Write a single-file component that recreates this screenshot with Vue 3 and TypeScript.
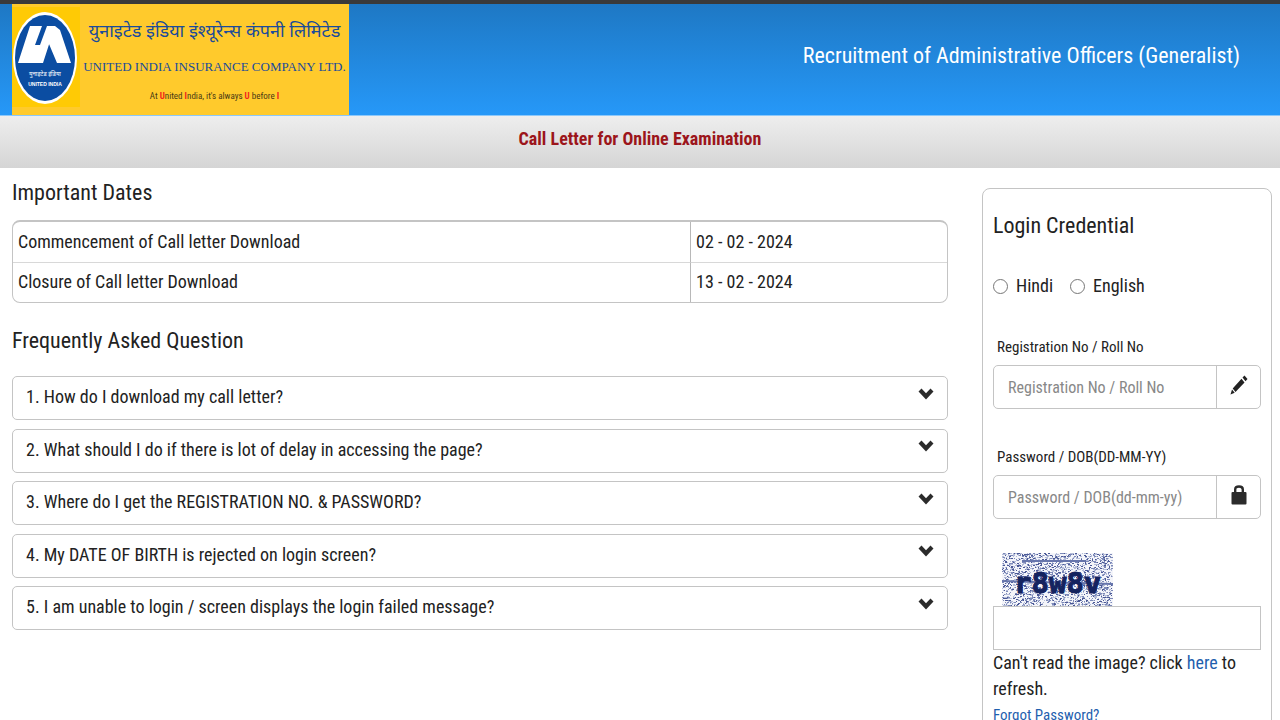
<script setup lang="ts">
import { ref } from 'vue'

interface DateRow {
  label: string
  value: string
}

const dates: DateRow[] = [
  { label: 'Commencement of Call letter Download', value: '02 - 02 - 2024' },
  { label: 'Closure of Call letter Download', value: '13 - 02 - 2024' },
]

const questions: string[] = [
  '1. How do I download my call letter?',
  '2. What should I do if there is lot of delay in accessing the page?',
  '3. Where do I get the REGISTRATION NO. & PASSWORD?',
  '4. My DATE OF BIRTH is rejected on login screen?',
  '5. I am unable to login / screen displays the login failed message?',
]

const language = ref<string>('')
const registration = ref<string>('')
const password = ref<string>('')
const captcha = ref<string>('')

// Seeded speckle layers behind the captcha characters.
function speckle(seed: number, count: number): string {
  let s = seed
  const next = (): number => {
    s = (s * 48271) % 2147483647
    return s / 2147483647
  }
  let d = ''
  for (let i = 0; i < count; i++) {
    const x = Math.floor(next() * 110)
    const y = Math.floor(next() * 53)
    const w = next() > 0.6 ? 2 : 1
    d += `M${x} ${y}h${w}v1h-${w}z`
  }
  return d
}

const layers = [
  { color: '#b4bcd8', d: speckle(1117, 1300) },
  { color: '#7c89b8', d: speckle(4721, 800) },
  { color: '#4a5896', d: speckle(9377, 500) },
]
</script>

<template>
  <div class="page">
    <header class="banner">
      <div class="brand">
        <svg class="emblem" viewBox="0 0 68 100" aria-hidden="true">
          <rect width="68" height="100" fill="#ffca05" />
          <ellipse cx="33" cy="51" rx="32" ry="46" fill="#fff" />
          <ellipse cx="33" cy="51" rx="30" ry="43" fill="#0b4da2" />
          <path d="M18 19H30L23 38H28L35 19H43L31 56H6zM43 19L48 23L59 56H45L37 37z" fill="#fff" />
          <text x="33" y="69" class="seal-hindi" lang="hi">युनाइटेड इंडिया</text>
          <text x="33" y="79" class="seal-english">UNITED INDIA</text>
        </svg>
        <div class="names">
          <span class="hindi" lang="hi">युनाइटेड इंडिया इंश्यूरेन्स कंपनी लिमिटेड</span>
          <span class="english">UNITED INDIA INSURANCE COMPANY LTD.</span>
          <span class="motto">At <b>U</b>nited <b>I</b>ndia, it's always <b>U</b> before <b>I</b></span>
        </div>
      </div>
      <h1>Recruitment of Administrative Officers (Generalist)</h1>
    </header>
    <div class="strip"><h2>Call Letter for Online Examination</h2></div>

    <main class="content">
      <div class="info">
        <h3>Important Dates</h3>
        <table class="dates">
          <tbody>
            <tr v-for="row in dates" :key="row.label">
              <td>{{ row.label }}</td>
              <td>{{ row.value }}</td>
            </tr>
          </tbody>
        </table>
        <h3 class="faq-title">Frequently Asked Question</h3>
        <div class="faq">
          <button v-for="q in questions" :key="q" type="button">
            <span>{{ q }}</span>
            <svg width="16" height="12" viewBox="0 0 16 12" aria-hidden="true">
              <path d="M0.500 3.500L3.500 0.500L8 5.200L12.500 0.500L15.500 3.500L8 11.500z" fill="#2b2b2b" />
            </svg>
          </button>
        </div>
      </div>

      <form class="login" @submit.prevent>
        <h3>Login Credential</h3>
        <div class="languages">
          <label><input v-model="language" type="radio" name="language" value="hi" />Hindi</label>
          <label><input v-model="language" type="radio" name="language" value="en" />English</label>
        </div>
        <label class="caption" for="registration">Registration No / Roll No</label>
        <div class="field">
          <input id="registration" v-model="registration" type="text" placeholder="Registration No / Roll No" />
          <span class="addon">
            <svg width="18" height="20" viewBox="0 0 18 20" aria-hidden="true">
              <path d="M12.500 2.500L14.500 0.500L17.500 4L15.500 6.300zM11.500 3.700L14.500 7.500L5.500 17L2.700 13.500zM2 14.500L4.700 17.800L0.500 19.500z" fill="#222" />
            </svg>
          </span>
        </div>
        <label class="caption" for="password">Password / DOB(DD-MM-YY)</label>
        <div class="field">
          <input id="password" v-model="password" type="password" placeholder="Password / DOB(dd-mm-yy)" />
          <span class="addon">
            <svg width="16" height="20" viewBox="0 0 16 20" aria-hidden="true">
              <path d="M4.200 7V4.500Q4.200 1.500 8 1.500Q11.800 1.500 11.800 4.500V7" fill="none" stroke="#2b2b2b" stroke-width="2.400" />
              <rect x="0.500" y="7" width="15" height="12.500" rx="1" fill="#2b2b2b" />
            </svg>
          </span>
        </div>
        <svg class="captcha" width="111" height="53" viewBox="0 0 111 53" role="img" aria-label="Captcha">
          <rect width="111" height="53" fill="#f4f5fa" />
          <path v-for="layer in layers" :key="layer.color" :d="layer.d" :fill="layer.color" />
          <path d="M20 8H84M0 28L111 31" stroke="#6675ac" stroke-width="2" fill="none" />
          <text x="12" y="40">r8w8v</text>
        </svg>
        <input v-model="captcha" class="answer" type="text" aria-label="Captcha text" />
        <p>Can't read the image? click <a href="#refresh">here</a> to refresh.</p>
        <a class="forgot" href="#forgot">Forgot Password?</a>
      </form>
    </main>
  </div>
</template>

<style>
body {
  margin: 0;
  background: #fff;
}
</style>

<style scoped>
.page {
  height: 100vh;
  overflow: hidden;
  font-family: "Roboto Condensed", "Liberation Sans", Arial, sans-serif;
  font-size: 18px;
  color: #222;
}
.page * {
  box-sizing: border-box;
}
h1, h2, h3, p {
  margin: 0;
  font-weight: 400;
}
a {
  color: #1f5fae;
  text-decoration: none;
}
.banner {
  display: flex;
  justify-content: space-between;
  height: 116px;
  padding: 0 40px 0 12px;
  border-top: 4px solid #3a3a3a;
  border-bottom: 1px solid #8cc8fa;
  background: linear-gradient(#1e78c4, #2698f8);
}
.banner h1 {
  font-size: 22px;
  line-height: 104px;
  color: #fff;
  white-space: nowrap;
}
.brand {
  display: flex;
  width: 337px;
  padding-top: 3px;
  background: #ffca2c;
}
.emblem {
  width: 68px;
  height: 100px;
}
.emblem text {
  fill: #fff;
  text-anchor: middle;
}
.seal-hindi {
  font-family: "Noto Sans", "Noto Sans Devanagari", sans-serif;
  font-size: 6px;
}
.seal-english {
  font-family: "Liberation Sans", Arial, sans-serif;
  font-size: 5px;
  font-weight: 700;
}
.names {
  flex: 1;
  display: flex;
  flex-direction: column;
  align-items: center;
  white-space: nowrap;
  color: #1a4b9b;
}
.hindi {
  font-family: "Noto Sans", "Noto Sans Devanagari", sans-serif;
  font-size: 18px;
  line-height: 46px;
}
.english {
  font-family: "Liberation Serif", serif;
  font-size: 13px;
  line-height: 28px;
}
.motto {
  font-size: 9px;
  line-height: 30px;
  color: #4a3a14;
}
.motto b {
  color: #f1241c;
}
.strip {
  height: 52px;
  background: linear-gradient(#eee, #d5d5d5);
  text-align: center;
}
.strip h2 {
  font-size: 18px;
  font-weight: 700;
  line-height: 46px;
  color: #9c151b;
}
.content {
  display: grid;
  grid-template-columns: minmax(0, 1fr) 290px;
  gap: 34px;
  padding: 0 8px 0 12px;
}
h3 {
  font-size: 22px;
  line-height: 30px;
}
.info {
  padding-top: 10px;
}
.dates {
  width: 100%;
  margin-top: 12px;
  border: 1px solid #c4c4c4;
  border-top-width: 2px;
  border-radius: 8px;
  border-spacing: 0;
}
.dates td {
  height: 40px;
  padding: 0 6px 2px 5px;
}
.dates td + td {
  width: 257px;
  border-left: 1px solid #b8b8b8;
}
.dates tr + tr td {
  border-top: 1px solid #d8d8d8;
}
.faq-title {
  margin-top: 23px;
}
.faq {
  display: flex;
  flex-direction: column;
  justify-content: space-between;
  min-height: 254px;
  margin-top: 20px;
}
.faq button {
  display: flex;
  justify-content: space-between;
  align-items: center;
  height: 44px;
  padding: 0 13px 3px;
  border: 1px solid #c4c4c4;
  border-radius: 5px;
  background: #fff;
  font: inherit;
  color: inherit;
}
.faq svg {
  margin-bottom: 6px;
}
.login {
  display: flex;
  flex-direction: column;
  margin-top: 20px;
  padding: 22px 10px 20px;
  border: 1px solid #c4c4c4;
  border-radius: 8px;
}
.languages {
  display: flex;
  gap: 17px;
  margin-top: 32px;
  line-height: 26px;
}
.languages label {
  display: flex;
  align-items: center;
  gap: 8px;
}
.languages input {
  width: 15px;
  height: 15px;
  margin: 0;
}
.caption {
  margin-top: 38px;
  padding-left: 4px;
  font-size: 15px;
  line-height: 20px;
}
.field {
  display: flex;
  height: 44px;
  margin-top: 8px;
  border: 1px solid #c4c4c4;
  border-radius: 5px;
}
.field input {
  flex: 1;
  min-width: 0;
  padding: 0 14px;
  border: 0;
  background: none;
  font: inherit;
  font-size: 16px;
}
.field input::placeholder {
  color: #888;
}
.addon {
  display: flex;
  align-items: center;
  justify-content: center;
  width: 44px;
  padding-bottom: 4px;
  border-left: 1px solid #c4c4c4;
}
.captcha {
  margin: 34px 0 0 9px;
}
.captcha text {
  font-family: "DejaVu Sans Mono", monospace;
  font-size: 29px;
  font-weight: 700;
  fill: #14235f;
  stroke: #14235f;
}
.answer {
  height: 44px;
  padding: 0 14px;
  border: 1px solid #c4c4c4;
  font: inherit;
}
.login p {
  line-height: 26px;
}
.forgot {
  font-size: 15px;
  line-height: 26px;
}
</style>
